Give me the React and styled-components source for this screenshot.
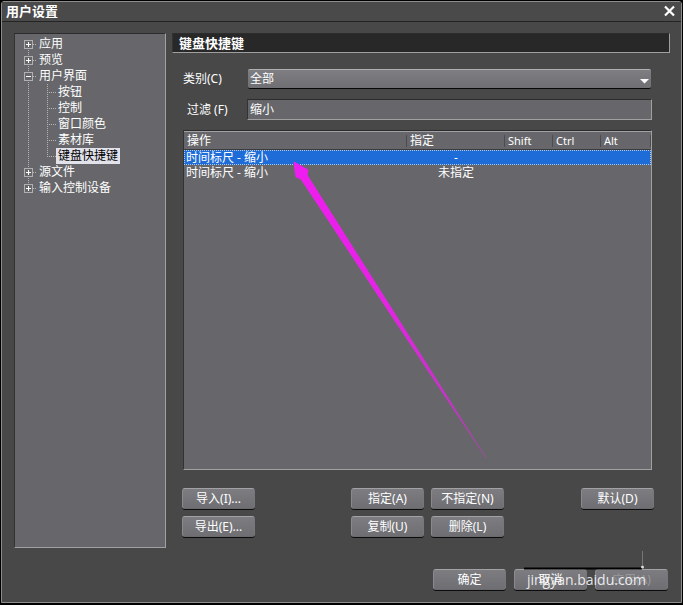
import React, { useState } from 'react';
import styled, { createGlobalStyle, css } from 'styled-components';

const GlobalStyle = createGlobalStyle`
  * { box-sizing: border-box; }
  body {
    margin: 0;
    background: #000;
    font-family: "Noto Sans", "Noto Sans CJK SC", sans-serif;
    font-size: 12px;
    line-height: 16px;
    color: #fff;
  }
  button, input, select { font: inherit; color: inherit; }
`;

const dotsDown = 'repeating-linear-gradient(to bottom, #b4b4b4 0 1px, transparent 1px 2px)';
const dotsAcross = 'repeating-linear-gradient(to right, #b4b4b4 0 1px, transparent 1px 2px)';

const sunken = css`
  border: 1px solid;
  border-color: #2c2c2c #a0a0a0 #a0a0a0 #333;
`;

const Window = styled.div`
  display: flex;
  flex-direction: column;
  min-height: calc(100vh - 3px);
  margin: 1px 1px 2px;
  background: #484848;
  border: 1px solid #8c8c8c;
  border-radius: 3px 3px 0 0;
`;

const TitleBar = styled.header`
  display: flex;
  align-items: center;
  justify-content: space-between;
  height: 20px;
  padding: 0 5px 2px 4px;
  background: #4a4a4a;
  border-bottom: 1px solid #242424;
`;

const Title = styled.h1`
  margin: 0;
  font-size: 13px;
  line-height: 16px;
  font-weight: 700;
`;

const CloseButton = styled.button`
  display: flex;
  padding: 0;
  border: 0;
  background: none;
`;

const Content = styled.main`
  flex: 1;
  display: grid;
  grid-template-columns: 152px 1fr;
  gap: 6px;
  padding: 11px 11px 0 12px;
`;

const TreePanel = styled.nav`
  ${sunken}
  padding: 2px 0 2px 9px;
  background: #67676b;
`;

const TreeList = styled.ul`
  list-style: none;
  margin: 0;
  padding: 0;
  background: ${dotsDown} 4px 8px / 1px calc(100% - 16px) no-repeat;
`;

const SubList = styled.ul`
  list-style: none;
  margin: 0 0 0 23px;
  padding: 0;
  background: ${dotsDown} 0 0 / 1px calc(100% - 8px) no-repeat;
`;

const TreeRow = styled.div`
  display: flex;
  align-items: center;
  height: 16px;
`;

const Toggle = styled.button`
  display: flex;
  width: 9px;
  height: 9px;
  padding: 0;
  border: 0;
  background: #67676b;
`;

const Branch = styled.span`
  width: ${p => (p.$long ? 9 : 4)}px;
  height: 1px;
  background: ${dotsAcross};
`;

const TreeLink = styled.a`
  padding: 0 2px;
  color: ${p => (p.$selected ? '#000' : '#fff')};
  background: ${p => (p.$selected ? '#e2e2ea' : 'transparent')};
  text-decoration: none;
  white-space: nowrap;
`;

const Page = styled.section`
  display: flex;
  flex-direction: column;
  min-width: 0;
`;

const PageTitle = styled.h2`
  ${sunken}
  margin: 0 0 16px;
  padding: 1px 6px;
  background: #282828;
  font-size: 13px;
  line-height: 16px;
  font-weight: 700;
`;

const Field = styled.div`
  display: grid;
  grid-template-columns: 64px 1fr;
  align-items: center;
  margin: 0 18px 10px 11px;
`;

const Label = styled.label`
  padding-left: ${p => (p.$indent ? 4 : 0)}px;
`;

const SelectBox = styled.div`
  display: grid;
  align-items: end;
  height: 20px;
  margin: 0 1px;
  background: linear-gradient(#7d7d82, #707074);
  border-top: 1px solid #b0b0b0;
  border-bottom: 1px solid #080808;
  border-radius: 2px;
  > * { grid-area: 1 / 1; }
  > svg { justify-self: end; margin: 0 2px 4px 0; pointer-events: none; }
`;

const Select = styled.select`
  appearance: none;
  width: 100%;
  height: 18px;
  padding: 0 2px;
  border: 0;
  background: transparent;
  option { background: #67676b; }
`;

const TextInput = styled.input`
  ${sunken}
  width: 100%;
  height: 21px;
  padding: 0 2px 1px;
  background: #67676b;
  border-radius: 0;
`;

const ListPanel = styled.div`
  ${sunken}
  position: relative;
  flex: 1;
  min-height: 120px;
  margin: 0 18px 0 11px;
  background: #67676b;
`;

const Table = styled.table`
  width: 100%;
  table-layout: fixed;
  border-spacing: 0;
  border-collapse: separate;
  border-top: 1px solid #a2a2a6;
`;

const Col = styled.col`
  width: ${p => p.$width};
`;

const HeadCell = styled.th`
  height: 18px;
  padding: 0 3px;
  border-bottom: 1px solid #3c3c40;
  background: linear-gradient(#4c4c50, #4c4c50) right center / 1px 12px no-repeat;
  font-size: ${p => (p.$latin ? 11 : 12)}px;
  line-height: 16px;
  font-weight: 400;
  text-align: left;
`;

const Row = styled.tr`
  background: ${p => (p.$selected ? '#1e6cd8' : 'transparent')};
  outline: ${p => (p.$selected ? '1px dotted #b8c8dc' : 'none')};
  outline-offset: -1px;
`;

const Cell = styled.td`
  height: 15px;
  padding: 0 2px;
  line-height: 15px;
  text-align: ${p => (p.$center ? 'center' : 'left')};
`;

const ArrowMark = styled.svg`
  position: absolute;
  left: 108px;
  top: 28px;
  pointer-events: none;
`;

const Actions = styled.div`
  display: flex;
  align-items: flex-start;
  margin: 18px 16px 11px 10px;
`;

const ActionGroup = styled.div`
  display: grid;
  grid-template-columns: repeat(${p => p.$columns}, 73px);
  gap: 7px;
  margin-left: ${p => p.$space || 0};
`;

const Button = styled.button`
  width: 73px;
  height: 21px;
  padding: 0;
  border: 1px solid;
  border-color: #a2a2a4 #77777b #6a6a6e #8a8a8e;
  border-radius: 3px;
  background: linear-gradient(#7c7c81, #6e6e73);
  box-shadow: 0 1px 0 #0c0c0c;
  line-height: 18px;
  white-space: nowrap;
  &:disabled { color: #98989c; }
`;

const Footer = styled.footer`
  position: relative;
  display: flex;
  justify-content: flex-end;
  gap: 8px;
  padding: 21px 13px 12px;
`;

const Watermark = styled.div`
  position: absolute;
  right: 32px;
  bottom: 12px;
  pointer-events: none;
  display: grid;
  justify-items: end;
  color: rgba(250, 250, 250, 0.9);
  font-family: "Open Sans", sans-serif;
  font-size: 14px;
  line-height: 20px;
  svg { display: block; }
  span { padding-right: 3px; }
`;

const topics = [
  { name: '应用' },
  { name: '预览' },
  { name: '用户界面', children: ['按钮', '控制', '窗口颜色', '素材库', '键盘快捷键'] },
  { name: '源文件' },
  { name: '输入控制设备' },
];

const shortcuts = [
  { action: '时间标尺 - 缩小', key: '-' },
  { action: '时间标尺 - 缩小', key: '未指定' },
];

function ToggleIcon({ open }) {
  return (
    <svg width="9" height="9" viewBox="0 0 9 9" shapeRendering="crispEdges" aria-hidden="true">
      <rect x="0.5" y="0.5" width="8" height="8" fill="none" stroke="#b0b0b2" />
      <path d={open ? 'M2 4.5h5' : 'M2 4.5h5M4.5 2v5'} stroke="#fff" />
    </svg>
  );
}

function Tree() {
  const [current, setCurrent] = useState('键盘快捷键');
  const link = name => (
    <TreeLink href="#" $selected={current === name} onClick={() => setCurrent(name)}>
      {name}
    </TreeLink>
  );
  return (
    <TreePanel aria-label="设置">
      <TreeList>
        {topics.map(topic => (
          <li key={topic.name}>
            <TreeRow>
              <Toggle aria-label={topic.name} aria-expanded={!!topic.children}>
                <ToggleIcon open={!!topic.children} />
              </Toggle>
              <Branch />
              {link(topic.name)}
            </TreeRow>
            {topic.children && (
              <SubList>
                {topic.children.map(name => (
                  <li key={name}>
                    <TreeRow>
                      <Branch $long />
                      {link(name)}
                    </TreeRow>
                  </li>
                ))}
              </SubList>
            )}
          </li>
        ))}
      </TreeList>
    </TreePanel>
  );
}

function ShortcutList() {
  const [selected, setSelected] = useState(0);
  return (
    <ListPanel>
      <Table>
        <colgroup>
          <Col $width="auto" />
          <Col $width="98px" />
          <Col $width="48px" />
          <Col $width="48px" />
          <Col $width="50px" />
        </colgroup>
        <thead>
          <tr>
            <HeadCell>操作</HeadCell>
            <HeadCell>指定</HeadCell>
            <HeadCell $latin>Shift</HeadCell>
            <HeadCell $latin>Ctrl</HeadCell>
            <HeadCell $latin>Alt</HeadCell>
          </tr>
        </thead>
        <tbody>
          {shortcuts.map((item, i) => (
            <Row key={i} $selected={i === selected} onClick={() => setSelected(i)}>
              <Cell>{item.action}</Cell>
              <Cell $center>{item.key}</Cell>
              <Cell />
              <Cell />
              <Cell />
            </Row>
          ))}
        </tbody>
      </Table>
      <ArrowMark width="200" height="304" viewBox="0 0 200 304" aria-hidden="true">
        <defs>
          <linearGradient id="fade" gradientUnits="userSpaceOnUse" x1="2" y1="3" x2="194" y2="300">
            <stop offset="0" stopColor="#f01cf0" />
            <stop offset="0.5" stopColor="#e424e4" />
            <stop offset="0.8" stopColor="#cc30cc" stopOpacity="0.9" />
            <stop offset="1" stopColor="#b040b0" stopOpacity="0.4" />
          </linearGradient>
        </defs>
        <path d="M2 3 L16 11 L15 16 L194 299 L9 20 L4 18 Z" fill="url(#fade)" stroke="url(#fade)" strokeWidth="1" strokeLinejoin="round" />
      </ArrowMark>
    </ListPanel>
  );
}

export default function App() {
  const [filter, setFilter] = useState('缩小');
  return (
    <>
      <GlobalStyle />
      <Window>
        <TitleBar>
          <Title>用户设置</Title>
          <CloseButton aria-label="关闭">
            <svg width="13" height="12" viewBox="0 0 13 12" aria-hidden="true">
              <path d="M2 1.5l9 9M11 1.5l-9 9" stroke="#fff" strokeWidth="2.2" />
            </svg>
          </CloseButton>
        </TitleBar>
        <Content>
          <Tree />
          <Page>
            <PageTitle>键盘快捷键</PageTitle>
            <Field>
              <Label htmlFor="category">类别(C)</Label>
              <SelectBox>
                <Select id="category" defaultValue="全部">
                  <option>全部</option>
                </Select>
                <svg width="9" height="5" viewBox="0 0 9 5" aria-hidden="true">
                  <path d="M0 0h9L4.500 4.500z" fill="#fff" />
                </svg>
              </SelectBox>
            </Field>
            <Field>
              <Label htmlFor="filter" $indent>过滤 (F)</Label>
              <TextInput id="filter" value={filter} onChange={e => setFilter(e.target.value)} />
            </Field>
            <ShortcutList />
            <Actions>
              <ActionGroup $columns={1}>
                <Button>导入(I)...</Button>
                <Button>导出(E)...</Button>
              </ActionGroup>
              <ActionGroup $columns={2} $space="96px">
                <Button>指定(A)</Button>
                <Button>不指定(N)</Button>
                <Button>复制(U)</Button>
                <Button>删除(L)</Button>
              </ActionGroup>
              <ActionGroup $columns={1} $space="auto">
                <Button>默认(D)</Button>
              </ActionGroup>
            </Actions>
          </Page>
        </Content>
        <Footer>
          <Button>确定</Button>
          <Button>取消</Button>
          <Button disabled>应用(A)</Button>
          <Watermark>
            <svg width="134" height="20" viewBox="0 0 134 20" aria-hidden="true">
              <path d="M9 18.500h118" stroke="#000" strokeWidth="2" />
              <path d="M127.500 1v14" stroke="#777" />
              <circle cx="127.500" cy="17" r="1.500" fill="#ddd" />
            </svg>
            <span>jingyan.baidu.com</span>
          </Watermark>
        </Footer>
      </Window>
    </>
  );
}
